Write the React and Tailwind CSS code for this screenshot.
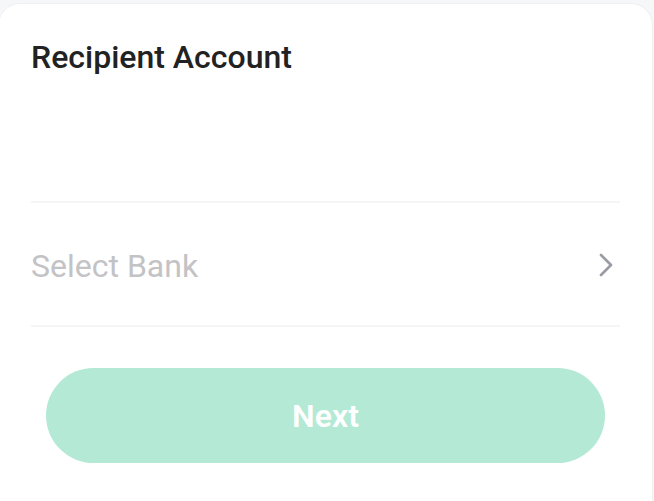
import { ChevronRight } from 'lucide-react'

// Recipient account step: bank picker + next button

export default function App() {
  return (
    <div className="min-h-screen bg-[#f6f7f9] pt-[3px] overflow-hidden" style={{ fontFamily: 'Roboto, "Noto Sans", sans-serif' }}>
      <div className="bg-white rounded-[22px] border border-[#f0f0f2] h-[520px] -ml-[2px] w-[655px] pl-[32px] pr-[32px]">
        {/* Title */}
        <h1 className="pt-[33px] text-[32px] leading-[40px] font-medium text-[#222222]">
          Recipient Account
        </h1>

        <div className="h-[126px] border-b-2 border-[#f5f5f5]" />

        {/* Bank select row */}
        <button className="w-full h-[124px] pt-[4px] flex items-center justify-between border-b-2 border-[#f5f5f5] text-left">
          <span className="text-[32px] text-[#c3c3c5]">Select Bank</span>
          <ChevronRight className="w-[40px] h-[40px] text-[#9a9ca3] -mr-[6px] -mt-[3px]" strokeWidth={1.6} />
        </button>

        {/* Next */}
        <div className="pt-[41px] px-[15px]">
          <button className="w-full h-[95px] rounded-full bg-[#b4e9d6] text-white text-[32px] font-semibold">
            Next
          </button>
        </div>
      </div>
    </div>
  )
}
